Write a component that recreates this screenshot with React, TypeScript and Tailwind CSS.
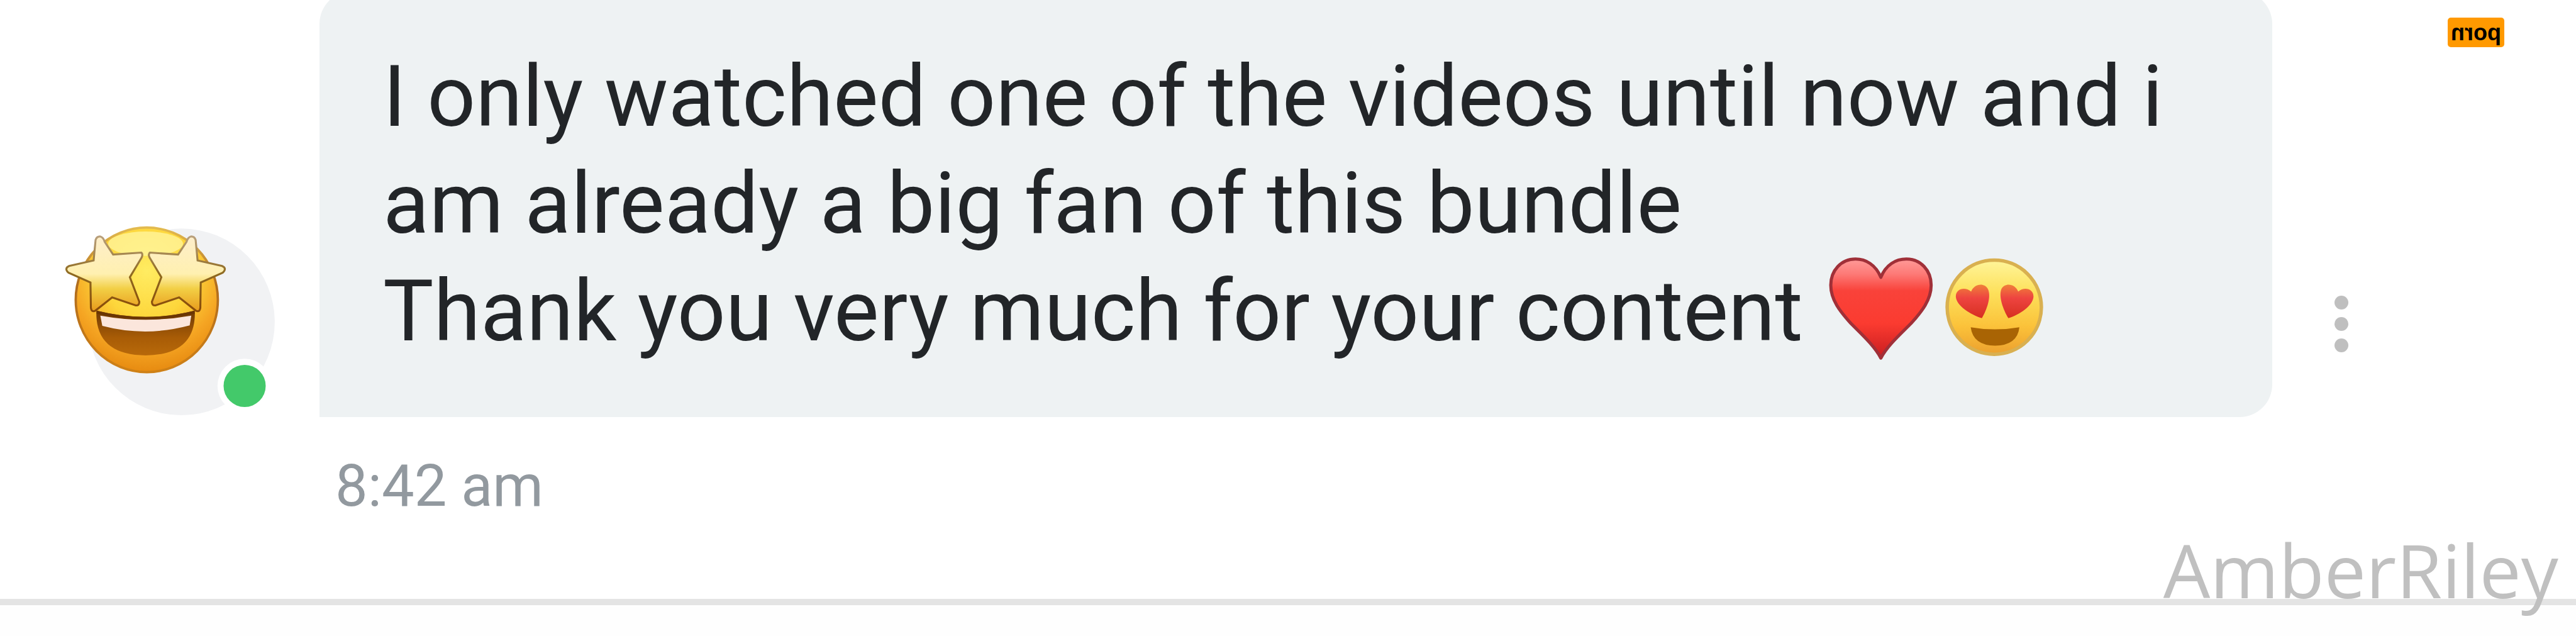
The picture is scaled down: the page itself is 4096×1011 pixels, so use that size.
import React from "react";

const STAR =
  "M268 178 Q285 182 292 205 L335 270 L478 260 Q488 268 480 285 L420 385 L468 510 Q468 530 450 528 L330 488 L245 555 Q225 565 222 540 L220 412 L108 362 Q85 340 112 328 L236 300 L246 195 Q252 178 268 178 Z";

const Avatar = () => {
  return (
    <svg
      viewBox="0 0 1380 1095"
      className="w-[432px] h-[343px] shrink-0"
      role="img"
      aria-label="Star-struck avatar, online"
    >
      <defs>
        <radialGradient id="face" cx="0.5" cy="0.3" r="0.72">
          <stop offset="0" stopColor="#ffec62" />
          <stop offset="0.45" stopColor="#fdd63b" />
          <stop offset="0.75" stopColor="#f5a523" />
          <stop offset="1" stopColor="#e5870e" />
        </radialGradient>
        <linearGradient id="rim" x1="0" y1="0" x2="0" y2="1">
          <stop offset="0" stopColor="#e3bb50" />
          <stop offset="0.4" stopColor="#b06c1e" />
          <stop offset="1" stopColor="#cf8116" />
        </linearGradient>
        <linearGradient id="star" x1="0" y1="0" x2="0" y2="1">
          <stop offset="0" stopColor="#fdeecb" />
          <stop offset="0.5" stopColor="#fff0b0" />
          <stop offset="0.7" stopColor="#f2cf45" />
          <stop offset="1" stopColor="#e89a1c" />
        </linearGradient>
        <linearGradient id="starEdge" x1="0" y1="0" x2="0" y2="1">
          <stop offset="0" stopColor="#b9a07c" />
          <stop offset="0.5" stopColor="#8f6a20" />
          <stop offset="1" stopColor="#8a4a08" />
        </linearGradient>
        <linearGradient id="mouth" x1="0" y1="0" x2="0" y2="1">
          <stop offset="0" stopColor="#6f3a05" />
          <stop offset="0.6" stopColor="#a85c06" />
          <stop offset="1" stopColor="#b8690a" />
        </linearGradient>
      </defs>
      <circle cx="682" cy="612" r="474" fill="#f1f2f4" />
      <ellipse
        cx="506"
        cy="500"
        rx="361"
        ry="367"
        fill="url(#face)"
        stroke="url(#rim)"
        strokeWidth="12"
      />
      <ellipse cx="500" cy="215" rx="190" ry="62" fill="#fff6a0" opacity="0.75" />
      <path
        d="M250 555 Q500 618 750 555 Q758 780 500 782 Q242 780 250 555 Z"
        fill="url(#mouth)"
      />
      <path
        d="M270 580 Q500 622 732 580 L724 630 Q500 690 280 632 Z"
        fill="#fbe6dc"
      />
      <path
        d="M252 562 Q500 625 748 562"
        fill="none"
        stroke="#6a3504"
        strokeWidth="14"
      />
      <path d={STAR} fill="url(#star)" stroke="url(#starEdge)" strokeWidth="10" />
      <path
        d={STAR}
        transform="translate(1000 0) scale(-1 1)"
        fill="url(#star)"
        stroke="url(#starEdge)"
        strokeWidth="10"
      />
      <circle cx="1003" cy="937" r="138" fill="#fff" />
      <circle cx="1003" cy="937" r="107" fill="#43c96a" />
    </svg>
  );
};

const Heart = () => {
  return (
    <svg
      viewBox="118 103 530 525"
      className="ml-[8px] inline-block w-[166px] h-[164px] align-[-32px]"
      role="img"
      aria-label="red heart"
    >
      <defs>
        <linearGradient id="heart" x1="0" y1="0" x2="0" y2="1">
          <stop offset="0" stopColor="#ff9a98" />
          <stop offset="0.15" stopColor="#fd7a77" />
          <stop offset="0.32" stopColor="#f9423a" />
          <stop offset="0.65" stopColor="#fb3b30" />
          <stop offset="1" stopColor="#c81c20" />
        </linearGradient>
      </defs>
      <path
        d="M382 205 C355 140 305 112 253 112 C180 112 127 170 127 245 C127 320 175 380 230 440 C290 500 350 555 382 616 C414 555 475 500 535 440 C590 380 638 320 638 245 C638 170 585 112 512 112 C458 112 408 140 382 205 Z"
        fill="url(#heart)"
        stroke="#a03038"
        strokeWidth="16"
        strokeLinejoin="round"
      />
    </svg>
  );
};

const HeartEyes = () => {
  return (
    <svg
      viewBox="708 103 500 507"
      className="ml-[19px] inline-block w-[156px] h-[159px] align-[-27px]"
      role="img"
      aria-label="smiling face with heart eyes"
    >
      <defs>
        <linearGradient id="smile" x1="0" y1="0" x2="0" y2="1">
          <stop offset="0" stopColor="#fff59a" />
          <stop offset="0.35" stopColor="#fde05a" />
          <stop offset="0.7" stopColor="#fbc23a" />
          <stop offset="1" stopColor="#eca02e" />
        </linearGradient>
        <linearGradient id="eye" x1="0" y1="0" x2="0" y2="1">
          <stop offset="0" stopColor="#f0803a" />
          <stop offset="0.4" stopColor="#ee4440" />
          <stop offset="1" stopColor="#d62f20" />
        </linearGradient>
      </defs>
      <circle
        cx="958"
        cy="356"
        r="240"
        fill="url(#smile)"
        stroke="#d9b050"
        strokeWidth="18"
      />
      <path
        d="M895 412 C840 395 765 350 762 302 C762 262 808 250 840 276 C855 238 905 228 925 262 C945 300 920 370 895 412 Z"
        fill="url(#eye)"
      />
      <path
        d="M1030 412 C1085 395 1155 350 1158 302 C1158 262 1112 250 1080 276 C1065 238 1015 228 995 262 C978 300 1004 370 1030 412 Z"
        fill="url(#eye)"
      />
      <path
        d="M838 458 Q960 480 1086 458 Q1076 550 962 552 Q850 550 838 458 Z"
        fill="#a96404"
      />
    </svg>
  );
};

const App = () => {
  return (
    <main className="w-full overflow-hidden bg-white font-['Roboto',sans-serif]">
      <section className="flex">
        <div className="w-[508px] shrink-0 flex items-end pl-[75px]">
          <Avatar />
        </div>
        <div className="-mt-[14px] flex-1 rounded-[52px] rounded-bl-none bg-[#eef2f3] pt-[83px] pb-[83px] px-[101px]">
          <p className="text-[135px] leading-[170px] text-[#222528]">
            I only watched one of the videos until now and i am already a big
            fan of this bundle
            <br />
            Thank you very much for your content <Heart />
            <HeartEyes />
          </p>
        </div>
        <div className="w-[483px] shrink-0 flex items-start justify-between pl-[99px] pr-[114px]">
          <button
            type="button"
            aria-label="Message options"
            className="mt-[470px] flex flex-col gap-3"
          >
            <span className="size-[22px] rounded-full bg-[#bfbfbf]" />
            <span className="size-[22px] rounded-full bg-[#bfbfbf]" />
            <span className="size-[22px] rounded-full bg-[#bfbfbf]" />
          </button>
          <span className="mt-[28px] flex h-[47px] w-[90px] -scale-x-100 items-center justify-center rounded-[5px] bg-[#ff9900] font-['Liberation_Sans',sans-serif] text-[36px] leading-[36px] font-bold text-black">
            porn
          </span>
        </div>
      </section>
      <time className="mt-[50px] ml-[533px] block text-[92px] leading-[120px] text-[#92999f]">
        8:42 am
      </time>
      <footer className="relative mt-[119px] border-t-[10px] border-[#e4e4e4] bg-[#fefefe] h-[60px]">
        <span className="absolute right-[28px] -top-[136px] font-['Open_Sans',sans-serif] text-[118px] leading-[160px] text-[#c0c0c0]">
          AmberRiley
        </span>
      </footer>
    </main>
  );
};

export default App;
